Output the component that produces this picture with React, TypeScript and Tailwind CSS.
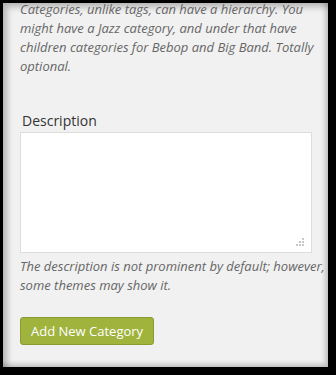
export default function App() {
  return (
    <div className="w-[336px] h-[375px] bg-black overflow-hidden">
      <div className="h-full border-t-[3px] border-l-[3px] border-r-[8px] border-b-[8px] border-black">
        <div
          className="h-full bg-[#f1f1f1] overflow-hidden shadow-[inset_4px_4px_6px_rgba(0,0,0,0.25),inset_-3px_-3px_5px_rgba(0,0,0,0.2)] pl-[17px] pr-[3px]"
          style={{ fontFamily: '"Open Sans", "Noto Sans", sans-serif' }}
        >
          <p className="-mt-[3px] text-[13px] leading-[19px] italic text-[#666]">
            Categories, unlike tags, can have a hierarchy. You might have a Jazz category, and under that have children
            categories for Bebop and Big Band. Totally optional.
          </p>

          <div className="mt-[35px]">
            <label className="block pl-[2px] text-[14px] leading-[20px] text-[#333]">Description</label>
            <div className="relative mt-[1px] h-[121px] w-[292px] bg-white border border-[#dddddd]">
              <svg className="absolute right-[6px] bottom-[5px]" width="10" height="10" viewBox="0 0 10 10">
                <rect x="7" y="1" width="2" height="2" fill="#c8c8c8" />
                <rect x="4" y="4" width="2" height="2" fill="#c8c8c8" />
                <rect x="7" y="4" width="2" height="2" fill="#c8c8c8" />
                <rect x="1" y="7" width="2" height="2" fill="#c8c8c8" />
                <rect x="4" y="7" width="2" height="2" fill="#c8c8c8" />
                <rect x="7" y="7" width="2" height="2" fill="#c8c8c8" />
              </svg>
            </div>
            <p className="mt-[4px] text-[13px] leading-[19px] italic text-[#666]">
              The description is not prominent by default; however, some themes may show it.
            </p>
          </div>

          <button className="mt-[22px] h-[28px] px-[10px] rounded-[3px] bg-[#9fb33d] border border-[#8a9c2f] text-white text-[13px] leading-[26px]">
            Add New Category
          </button>
        </div>
      </div>
    </div>
  )
}
